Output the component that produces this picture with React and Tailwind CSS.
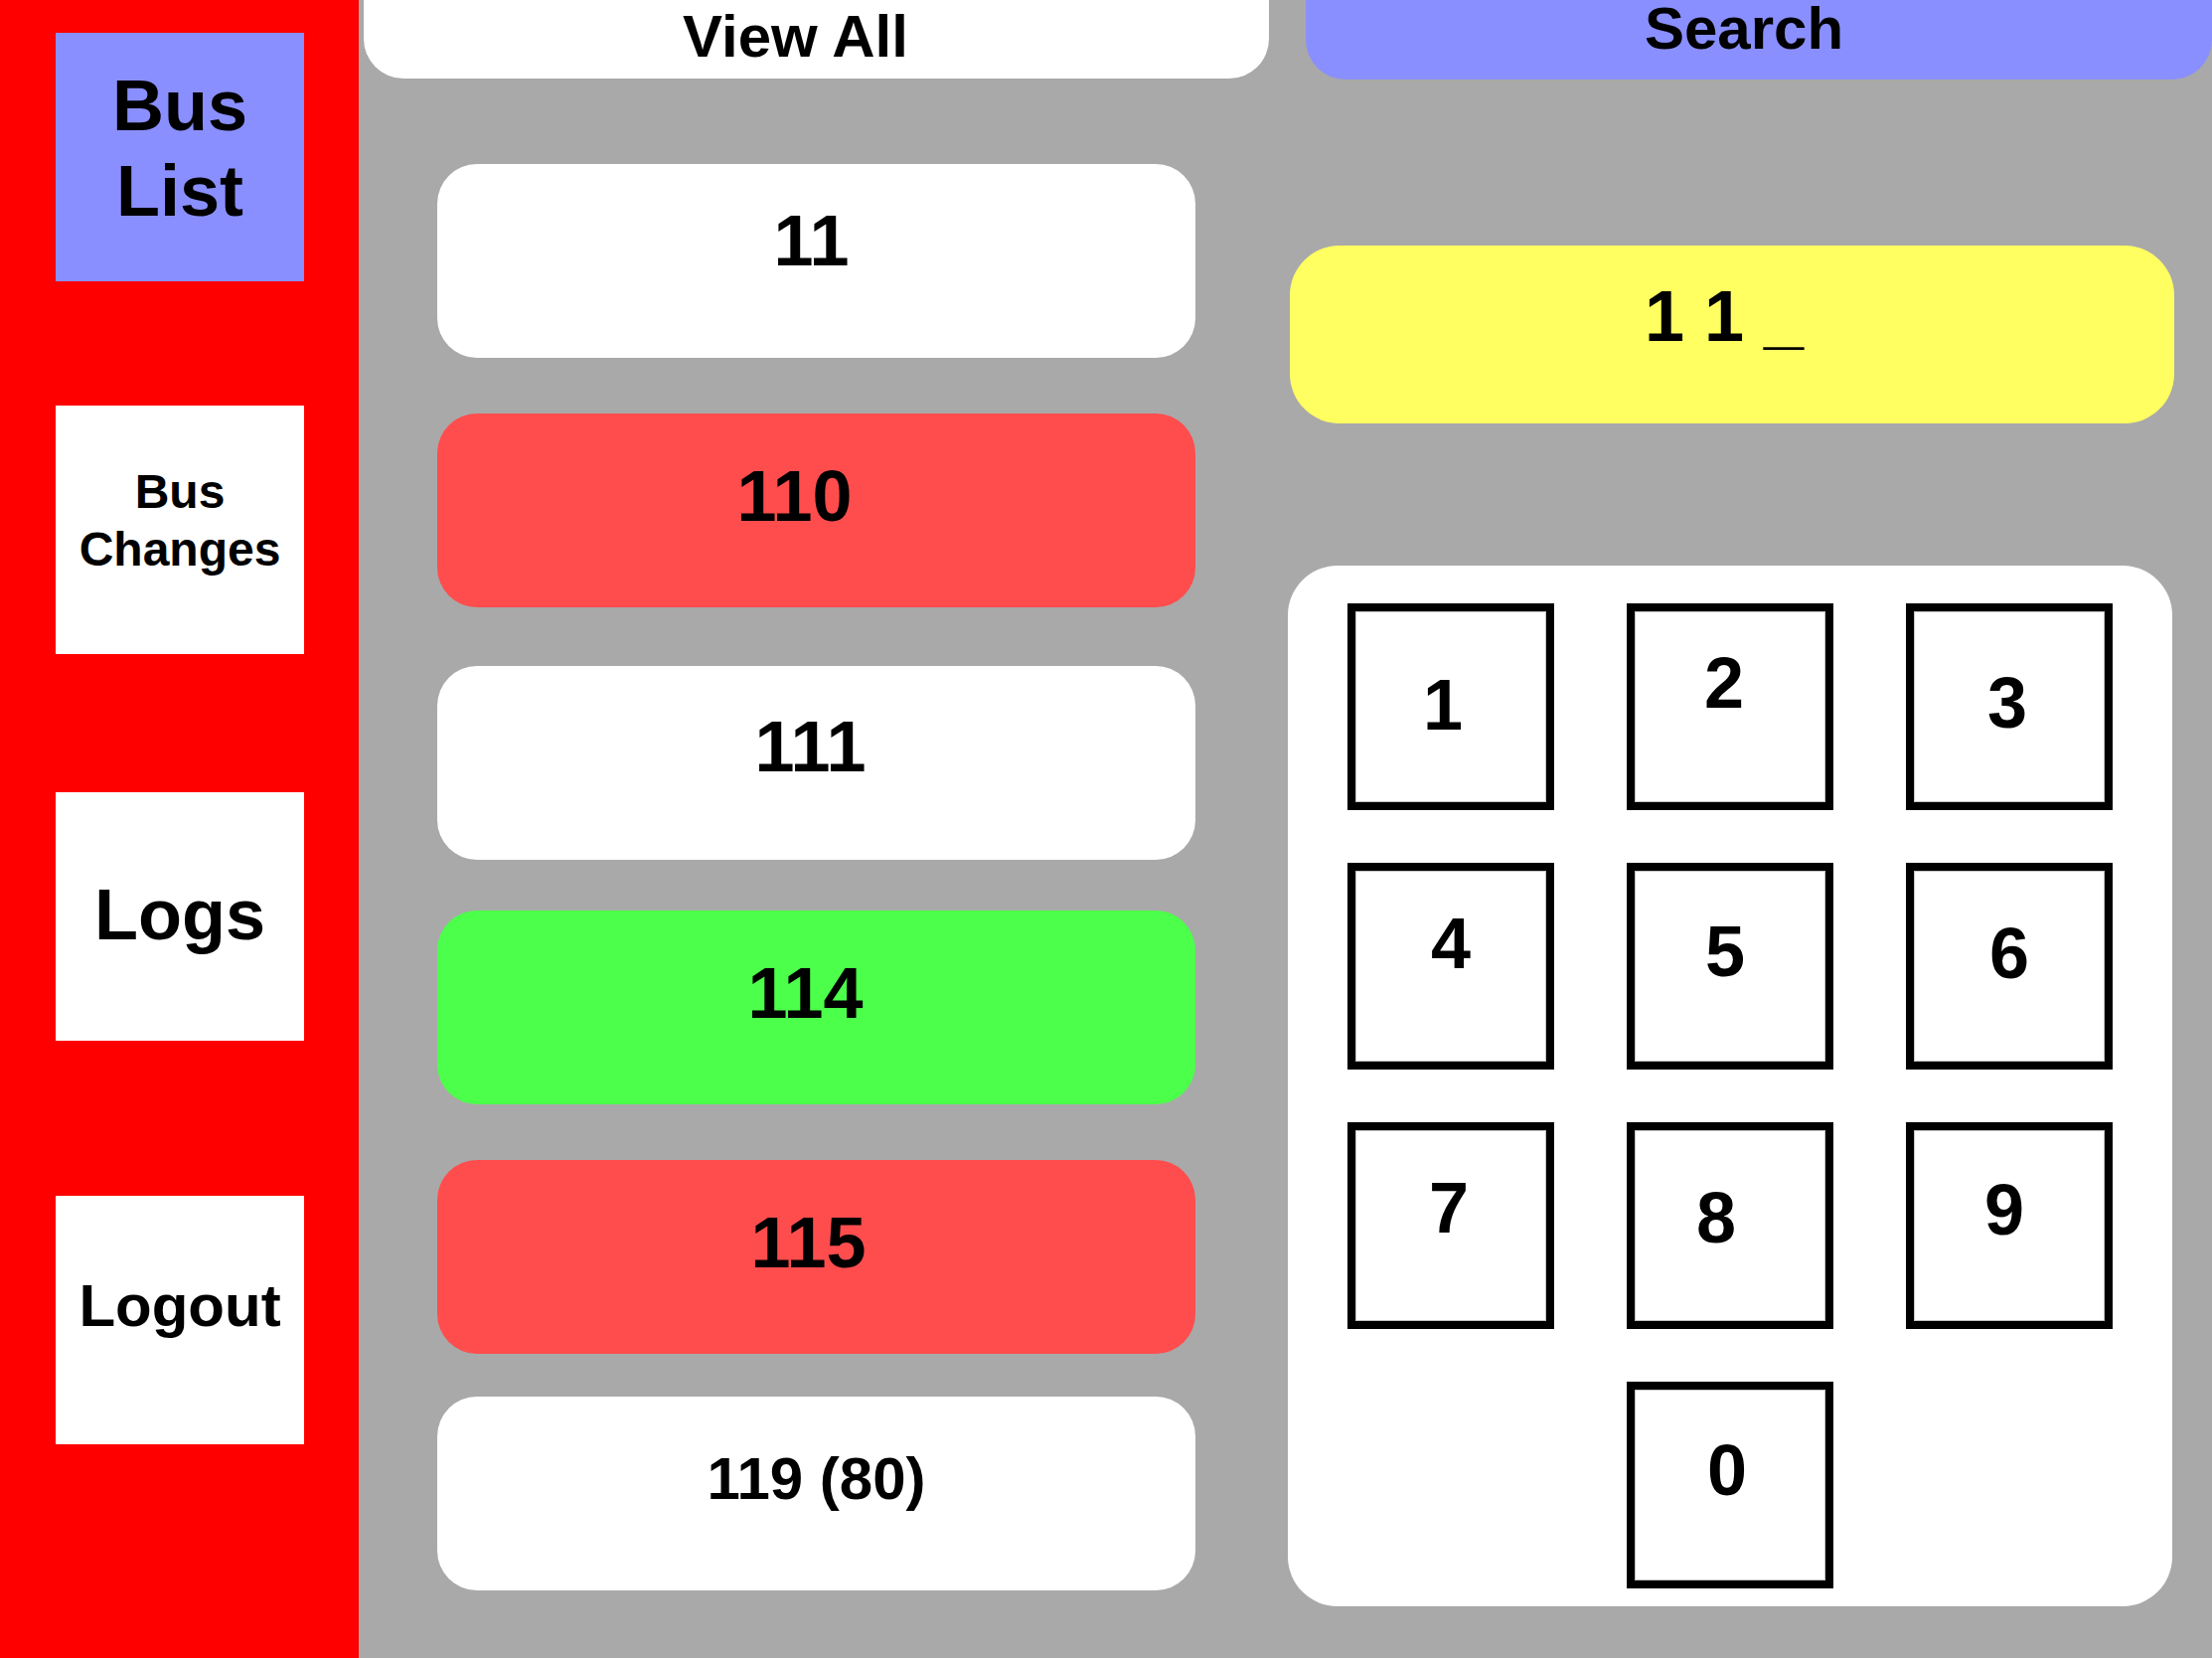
import React from "react";

const cards = [
  { label: "11", bg: "bg-white", mt: "mt-[86px]", size: "text-[72px]", shift: "pr-[10px] pb-[42px]" },
  { label: "110", bg: "bg-[#ff4d4d]", mt: "mt-[56px]", size: "text-[72px]", shift: "pr-[44px] pb-[30px]" },
  { label: "111", bg: "bg-white", mt: "mt-[59px]", size: "text-[72px]", shift: "pr-[12px] pb-[33px]" },
  { label: "114", bg: "bg-[#4cff4a]", mt: "mt-[51px]", size: "text-[72px]", shift: "pr-[22px] pb-[30px]" },
  { label: "115", bg: "bg-[#ff4d4d]", mt: "mt-[56px]", size: "text-[72px]", shift: "pr-[16px] pb-[30px]" },
  { label: "119 (80)", bg: "bg-white", mt: "mt-[43px]", size: "text-[60px]", shift: "pr-[0px] pb-[29px]" },
];

const keys = [
  { d: "1", cls: "pb-[4px] pr-[16px]" },
  { d: "2", cls: "pb-[48px] pr-[12px]" },
  { d: "3", cls: "pb-[8px] pr-[4px]" },
  { d: "4", cls: "pb-[46px]" },
  { d: "5", cls: "pb-[30px] pr-[10px]" },
  { d: "6", cls: "pb-[26px]" },
  { d: "7", cls: "pb-[36px] pr-[4px]" },
  { d: "8", cls: "pb-[16px] pr-[28px]" },
  { d: "9", cls: "pb-[32px] pr-[10px]" },
];

function Key({ d, cls }) {
  return (
    <div
      className={
        "w-[208px] h-[208px] border-[8px] border-black bg-white shadow-[inset_0_0_0_1px_#c4c4c4] flex items-center justify-center text-[72px] font-bold leading-none text-black " +
        cls
      }
    >
      {d}
    </div>
  );
}

export default function App() {
  return (
    <div className="w-[2226px] h-[1668px] overflow-hidden flex bg-[#a9a9a9] font-['Liberation_Sans',Arial,sans-serif] text-black">
      {/* Sidebar */}
      <div className="w-[361px] h-full bg-[#ff0000] flex flex-col pl-[56px]">
        <div className="mt-[33px] w-[250px] h-[250px] bg-[#8a8fff] flex items-center justify-center text-center text-[72px] font-bold leading-[1.2] pb-[18px]">
          Bus
          <br />
          List
        </div>
        <div className="mt-[125px] w-[250px] h-[250px] bg-white flex items-center justify-center text-center text-[48px] font-bold leading-[1.2] pb-[18px]">
          Bus
          <br />
          Changes
        </div>
        <div className="mt-[139px] w-[250px] h-[250px] bg-white flex items-center justify-center text-[72px] font-bold pb-[4px]">
          Logs
        </div>
        <div className="mt-[156px] w-[250px] h-[250px] bg-white flex items-center justify-center text-[60px] font-bold pb-[28px]">
          Logout
        </div>
      </div>

      {/* Middle column */}
      <div className="w-[929px] flex flex-col">
        <div className="ml-[5px] w-[911px] h-[79px] bg-white rounded-b-[40px] flex items-end justify-center text-[60px] font-bold leading-none pb-[12px] pr-[42px]">
          View All
        </div>
        {cards.map((c) => (
          <div
            key={c.label}
            className={
              "ml-[79px] w-[763px] h-[195px] rounded-[40px] flex items-center justify-center font-bold leading-none " +
              c.bg +
              " " +
              c.mt +
              " " +
              c.size +
              " " +
              c.shift
            }
          >
            {c.label}
          </div>
        ))}
      </div>

      {/* Right column */}
      <div className="flex-1 flex flex-col">
        <div className="ml-[24px] w-[912px] h-[80px] bg-[#8a8fff] rounded-b-[40px] flex items-end justify-center text-[60px] font-bold leading-none pb-[21px] pr-[30px]">
          Search
        </div>
        <div className="mt-[167px] ml-[8px] w-[890px] h-[179px] bg-[#ffff62] rounded-[50px] flex items-center justify-center text-[72px] font-bold leading-none pb-[38px] pr-[16px] whitespace-pre">
          {"1 1 _"}
        </div>
        <div className="mt-[143px] ml-[6px] w-[890px] h-[1047px] bg-white rounded-[50px] pt-[38px]">
          <div className="grid grid-cols-[208px_208px_208px] gap-x-[73px] gap-y-[53px] justify-center">
            {keys.map((k) => (
              <Key key={k.d} d={k.d} cls={k.cls} />
            ))}
            <div />
            <Key d="0" cls="pb-[30px] pr-[6px]" />
            <div />
          </div>
        </div>
      </div>
    </div>
  );
}
